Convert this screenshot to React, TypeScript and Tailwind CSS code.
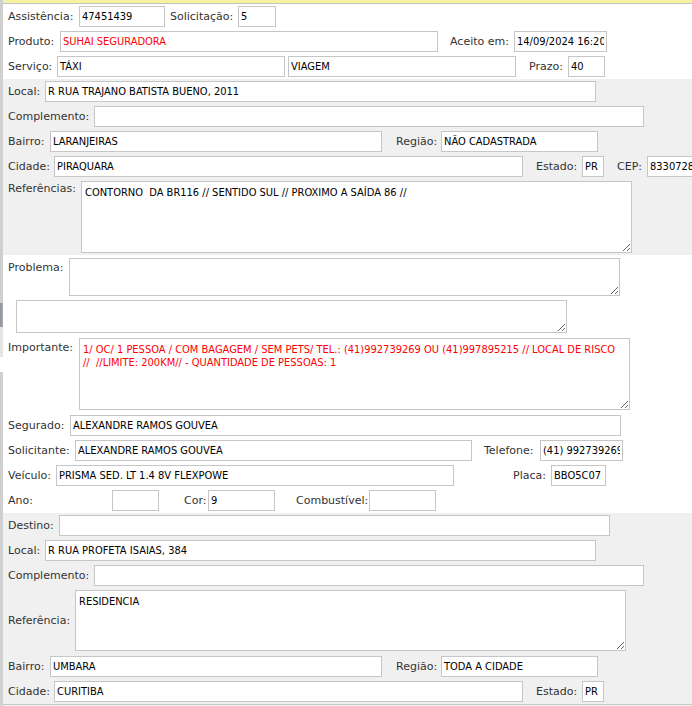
import React from "react";

const LBL = "shrink-0 whitespace-nowrap text-[11px] leading-[13px] text-[#333333] font-['DejaVu_Sans',sans-serif]";
const INP = "h-[21px] shrink-0 border border-[#c6c6c6] bg-white px-[2px] text-[11px] outline-none font-['DejaVu_Sans_Condensed','DejaVu_Sans',sans-serif]";
const TA = "shrink-0 border border-[#c6c6c6] bg-white px-[3px] pt-[4px] text-[11px] leading-[13px] outline-none overflow-hidden whitespace-pre font-['DejaVu_Sans_Condensed','DejaVu_Sans',sans-serif]";

function L({ c, t }: { c: string; t: string }) {
  return <span className={`${LBL} ${c}`}>{t}</span>;
}
function I({ c, v, red }: { c: string; v?: string; red?: boolean }) {
  return (
    <input
      readOnly
      defaultValue={v ?? ""}
      className={`${INP} ${c} ${red ? "text-[#ff0000]" : "text-black"}`}
    />
  );
}
function T({ c, v, red }: { c: string; v?: string; red?: boolean }) {
  return (
    <textarea
      readOnly
      defaultValue={v ?? ""}
      className={`${TA} ${c} ${red ? "text-[#ff0000]" : "text-black"}`}
    />
  );
}
function Row({ children }: { children: React.ReactNode }) {
  return <div className="flex h-[25px] items-center pl-[5px]">{children}</div>;
}

export default function App() {
  return (
    <div className="flex h-[706px] w-[692px] overflow-hidden bg-white">
      {/* left strip */}
      <div className="flex w-[3px] shrink-0 flex-col">
        <div className="h-[303px] bg-[#d0d0d0]" />
        <div className="h-[24px] bg-gradient-to-r from-[#8e949a] to-[#a9aeb3]" />
        <div className="h-[30px] bg-[#e4e4e4]" />
        <div className="h-[15px] bg-white" />
        <div className="flex-1 bg-[#d0d0d0]" />
      </div>
      <div className="flex min-w-0 flex-1 flex-col">
        <div className="h-[3px] shrink-0 bg-[#f6f2a4]" />
        <div className="h-[1px] shrink-0 bg-[#c4c4c4]" />

        {/* white section 1 */}
        <div className="bg-white">
          <Row>
            <L c="w-[71px]" t="Assistência:" />
            <I c="w-[86px]" v="47451439" />
            <L c="w-[73px] pl-[5px]" t="Solicitação:" />
            <I c="w-[38px]" v="5" />
          </Row>
          <Row>
            <L c="w-[52px]" t="Produto:" />
            <I c="w-[378px]" v="SUHAI SEGURADORA" red />
            <L c="w-[76px] pl-[12px]" t="Aceito em:" />
            <I c="w-[93px]" v="14/09/2024 16:20" />
          </Row>
          <Row>
            <L c="w-[49px]" t="Serviço:" />
            <I c="w-[228px]" v="TÁXI" />
            <I c="ml-[3px] w-[228px]" v="VIAGEM" />
            <L c="w-[52px] pl-[13px]" t="Prazo:" />
            <I c="w-[37px]" v="40" />
          </Row>
        </div>

        {/* gray section 1 */}
        <div className="bg-[#f0f0f0]">
          <Row>
            <L c="w-[37px]" t="Local:" />
            <I c="w-[551px]" v="R RUA TRAJANO BATISTA BUENO, 2011" />
          </Row>
          <Row>
            <L c="w-[86px]" t="Complemento:" />
            <I c="w-[550px]" v="" />
          </Row>
          <Row>
            <L c="w-[42px]" t="Bairro:" />
            <I c="w-[332px]" v="LARANJEIRAS" />
            <L c="w-[59px] pl-[14px]" t="Região:" />
            <I c="w-[157px]" v="NÃO CADASTRADA" />
          </Row>
          <Row>
            <L c="w-[46px]" t="Cidade:" />
            <I c="w-[469px]" v="PIRAQUARA" />
            <L c="w-[59px] pl-[13px]" t="Estado:" />
            <I c="w-[22px]" v="PR" />
            <L c="w-[43px] pl-[13px]" t="CEP:" />
            <I c="w-[70px]" v="83307280" />
          </Row>
          <div className="flex items-start pl-[5px] pt-[2px] pb-[2px]">
            <L c="w-[73px] pt-[1px]" t="Referências:" />
            <T c="h-[72px] w-[551px]" v="CONTORNO  DA BR116 // SENTIDO SUL // PROXIMO A SAÍDA 86 //" />
          </div>
        </div>

        {/* white section 2 */}
        <div className="bg-white">
          <div className="flex items-start pl-[5px] pt-[3px] pb-[2px]">
            <L c="w-[61px] pt-[3px]" t="Problema:" />
            <T c="h-[38px] w-[551px]" />
          </div>
          <div className="flex items-start pl-[5px] pt-[2px] pb-[2px]">
            <T c="ml-[8px] h-[33px] w-[551px]" />
          </div>
          <div className="flex items-start pl-[5px] pt-[3px] pb-[3px]">
            <L c="w-[71px] pt-[3px]" t="Importante:" />
            <T
              c="h-[72px] w-[551px]"
              red
              v={"1/ OC/ 1 PESSOA / COM BAGAGEM / SEM PETS/ TEL.: (41)992739269 OU (41)997895215 // LOCAL DE RISCO\n//  //LIMITE: 200KM// - QUANTIDADE DE PESSOAS: 1"}
            />
          </div>
          <Row>
            <L c="w-[62px]" t="Segurado:" />
            <I c="w-[551px]" v="ALEXANDRE RAMOS GOUVEA" />
          </Row>
          <Row>
            <L c="w-[67px]" t="Solicitante:" />
            <I c="w-[397px]" v="ALEXANDRE RAMOS GOUVEA" />
            <L c="w-[68px] pl-[12px]" t="Telefone:" />
            <I c="w-[83px]" v="(41) 992739269" />
          </Row>
          <Row>
            <L c="w-[48px]" t="Veículo:" />
            <I c="w-[398px]" v="PRISMA SED. LT 1.4 8V FLEXPOWE" />
            <L c="w-[97px] pl-[59px]" t="Placa:" />
            <I c="w-[55px]" v="BBO5C07" />
          </Row>
          <Row>
            <L c="w-[104px]" t="Ano:" />
            <I c="w-[47px]" v="" />
            <L c="w-[49px] pl-[25px]" t="Cor:" />
            <I c="w-[67px]" v="9" />
            <L c="w-[94px] pl-[21px]" t="Combustível:" />
            <I c="w-[67px]" v="" />
          </Row>
        </div>

        {/* gray section 2 */}
        <div className="flex flex-1 flex-col bg-[#f0f0f0]">
          <Row>
            <L c="w-[51px]" t="Destino:" />
            <I c="w-[551px]" v="" />
          </Row>
          <Row>
            <L c="w-[37px]" t="Local:" />
            <I c="w-[551px]" v="R RUA PROFETA ISAIAS, 384" />
          </Row>
          <Row>
            <L c="w-[86px]" t="Complemento:" />
            <I c="w-[550px]" v="" />
          </Row>
          <div className="flex items-center pl-[5px] pt-[2px] pb-[3px]">
            <L c="w-[67px]" t="Referência:" />
            <T c="h-[61px] w-[551px]" v="RESIDENCIA" />
          </div>
          <Row>
            <L c="w-[42px]" t="Bairro:" />
            <I c="w-[332px]" v="UMBARA" />
            <L c="w-[59px] pl-[14px]" t="Região:" />
            <I c="w-[157px]" v="TODA A CIDADE" />
          </Row>
          <Row>
            <L c="w-[46px]" t="Cidade:" />
            <I c="w-[469px]" v="CURITIBA" />
            <L c="w-[59px] pl-[13px]" t="Estado:" />
            <I c="w-[22px]" v="PR" />
          </Row>
          <div className="h-[1px] shrink-0 bg-[#c8c8c8]" />
          <div className="flex-1 bg-[#f0f0f0]" />
        </div>
      </div>
    </div>
  );
}
